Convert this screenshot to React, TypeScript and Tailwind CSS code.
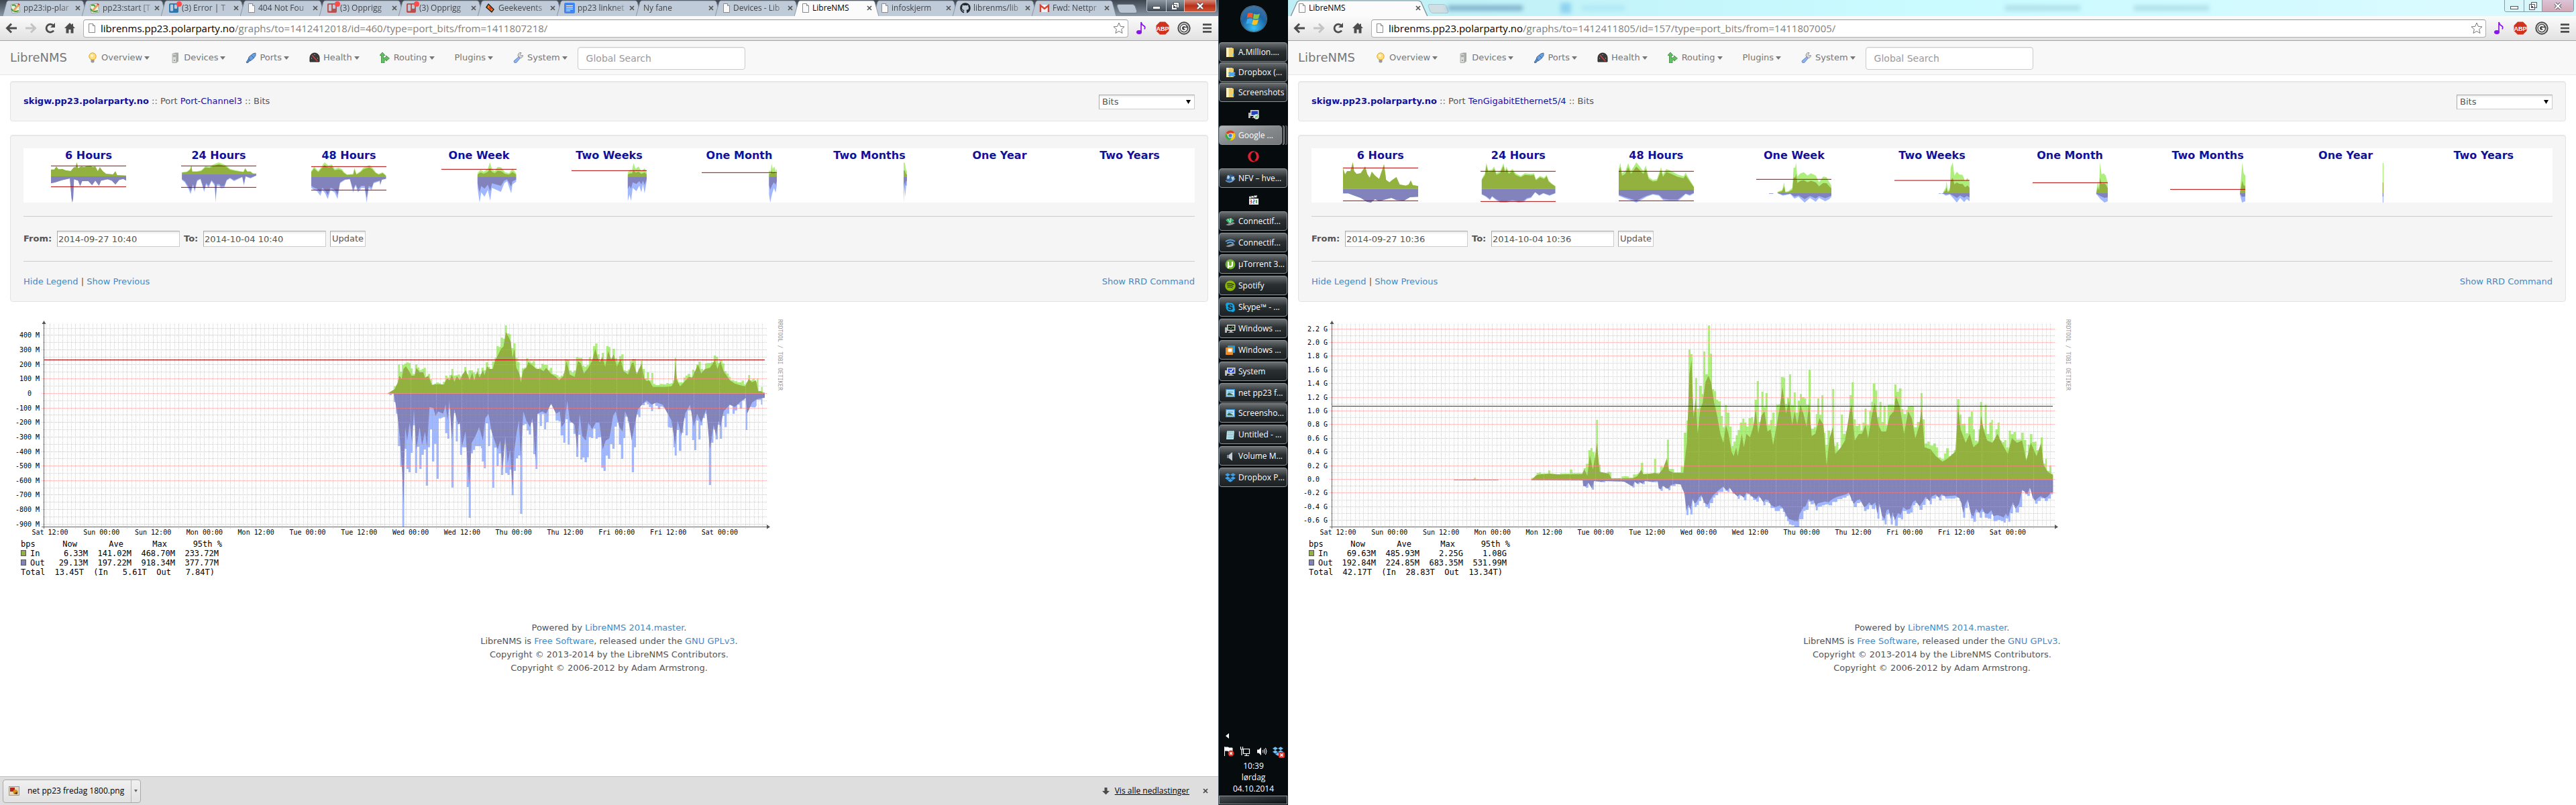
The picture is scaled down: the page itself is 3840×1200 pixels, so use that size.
import React from "react";
import { FaDropbox, FaGithub, FaOpera, FaSkype, FaSpotify, FaTrello } from "react-icons/fa";

const GREEN = "#92b13e";
const LIGHT_GREEN = "#aeee7d";
const VIOLET = "#8282bd";
const LIGHT_BLUE = "#a2b8fe";

/* ---------- chart helpers ---------- */

function pairs(s: string): number[][] {
  return s.trim().split(/\s+/).map((p) => p.split(",").map(Number));
}

function stepped(s: string, zero: number): string {
  const pts = pairs(s);
  let d = `M${pts[0][0]},${zero}`;
  pts.forEach(([x, y]) => {
    d += `H${x}V${y}`;
  });
  return d + `V${zero}Z`;
}

function filled(s: string, zero: number, factor = 1): string {
  const pts = pairs(s);
  const line = pts.map(([x, y]) => `L${x},${zero + (y - zero) * factor}`).join("");
  return `M${pts[0][0]},${zero}${line}L${pts[pts.length - 1][0]},${zero}Z`;
}

/* ---------- chart data ---------- */

type Traffic = {
  box: { x: number; y: number; w: number; h: number; view: string };
  zero: number;
  maxIn: string;
  avgIn: string;
  maxOut: string;
  avgOut?: string;
  axisZero: number;
  axisStep: number;
  labels: string[];
  first: number;
  limit: number;
};

const channelTraffic: Traffic = {
  box: { x: 570, y: 470, w: 580, h: 330, view: "0 0 1568 990" },
  zero: 350,
  maxIn:
    "20,347 46,318 55,313 63,220 71,252 79,222 88,217 97,211 106,214 114,237 122,262 132,220 141,233 149,245 158,240 167,235 175,275 184,262 192,285 200,310 209,305 218,300 227,304 235,309 244,297 253,270 262,278 270,267 278,240 286,270 295,268 304,265 313,272 321,262 330,231 338,265 347,246 356,246 365,255 373,262 382,237 390,262 399,235 408,246 417,210 426,230 434,242 443,207 452,190 460,138 469,142 477,100 486,105 494,45 502,81 511,85 518,147 528,125 537,190 545,210 553,275 562,237 571,233 580,192 588,205 597,212 606,205 614,233 623,239 632,235 641,217 650,222 659,222 667,245 675,235 684,262 693,263 701,268 710,275 719,270 727,260 736,196 745,200 753,247 762,255 771,247 780,187 789,190 797,190 806,225 814,230 823,223 832,187 840,197 849,138 858,126 867,175 875,205 884,168 893,200 902,138 911,142 919,190 928,150 937,192 946,205 954,182 963,175 972,245 980,250 989,242 998,205 1006,195 1015,195 1022,255 1032,240 1041,204 1049,240 1058,282 1066,255 1075,290 1084,258 1092,307 1100,312 1118,307 1130,308 1144,303 1153,306 1162,304 1170,290 1178,190 1184,285 1192,300 1204,300 1213,278 1222,270 1230,262 1240,275 1248,243 1257,250 1265,220 1274,207 1283,240 1292,245 1300,215 1310,213 1326,210 1335,180 1344,185 1353,213 1361,200 1370,215 1378,250 1387,260 1396,275 1404,290 1418,295 1430,300 1440,300 1448,292 1457,308 1466,300 1474,267 1482,290 1491,282 1500,297 1509,282 1515,338 1526,320 1532,345 1541,345",
  avgIn:
    "20,350 50,330 62,300 68,270 78,285 85,240 95,228 105,245 118,270 130,270 137,235 150,255 165,255 172,280 185,270 200,312 215,308 230,308 248,310 260,282 272,290 280,265 290,298 300,272 312,290 325,262 336,245 345,270 352,290 362,255 370,292 382,250 392,278 405,245 412,268 422,228 432,240 445,240 455,200 465,180 478,150 488,140 498,75 508,95 518,120 524,190 532,150 540,235 552,260 558,300 568,245 580,235 588,210 605,225 620,240 635,240 650,250 660,235 680,262 700,275 712,290 730,272 742,205 755,265 775,275 788,205 800,215 812,260 830,235 845,205 858,150 868,190 876,210 886,185 898,230 910,160 922,200 932,175 945,230 960,195 972,250 990,265 1005,215 1012,210 1025,265 1044,215 1055,280 1065,295 1075,290 1090,320 1110,320 1140,320 1165,318 1175,300 1181,205 1187,290 1200,318 1215,300 1235,275 1248,280 1260,250 1272,220 1285,260 1300,240 1320,235 1340,200 1350,240 1362,205 1375,250 1400,290 1420,305 1440,312 1462,318 1476,285 1490,300 1505,290 1515,340 1525,340 1541,348",
  maxOut:
    "20,352 28,357 38,352 46,388 55,440 63,585 72,678 81,945 88,597 97,687 105,702 114,615 122,492 132,705 140,588 149,687 158,624 167,600 175,762 184,590 192,510 200,654 209,575 218,731 227,461 238,458 244,455 253,527 262,552 270,418 278,770 287,438 296,564 304,485 313,624 321,590 330,590 340,768 348,906 356,617 365,602 373,585 390,585 397,595 401,654 409,684 417,483 426,585 434,510 443,771 451,592 460,675 469,618 478,714 487,575 495,705 504,714 513,690 521,805 529,696 538,640 547,627 555,888 564,492 573,487 582,515 590,533 599,480 608,621 617,687 625,442 634,495 643,442 652,510 660,478 670,402 680,397 690,410 698,470 710,475 718,537 729,570 738,465 747,578 755,480 770,530 781,633 790,535 798,645 806,636 815,657 824,635 832,545 841,549 850,507 859,552 868,545 882,682 891,696 900,628 909,642 918,576 927,597 936,498 945,480 953,578 962,642 971,549 979,454 988,475 997,470 1005,702 1014,590 1022,443 1032,455 1040,402 1050,402 1058,390 1066,398 1074,410 1083,428 1091,388 1100,405 1110,420 1120,408 1130,412 1140,422 1150,500 1158,503 1168,497 1173,590 1178,627 1186,513 1195,606 1205,525 1213,460 1222,537 1231,425 1240,425 1248,558 1257,603 1265,470 1274,555 1282,492 1290,460 1300,440 1308,440 1316,759 1325,570 1334,510 1343,555 1352,490 1360,552 1369,450 1379,500 1388,440 1398,400 1411,440 1420,425 1430,400 1440,418 1450,380 1460,370 1464,513 1471,410 1490,412 1505,405 1508,378 1520,378 1526,400 1531,370 1541,370",
  avgOut:
    "46,350 60,440 70,540 80,700 85,850 92,500 100,560 110,480 120,570 127,420 137,600 150,500 160,580 172,520 180,590 190,410 205,415 215,450 225,430 245,440 255,400 262,470 270,380 280,560 290,420 305,490 312,480 320,590 335,520 345,690 350,760 360,570 375,540 390,500 405,560 415,460 428,440 440,520 452,560 465,600 475,560 485,690 495,540 505,660 515,600 524,780 532,600 542,520 550,470 558,640 568,430 580,470 595,500 605,460 618,650 625,440 645,430 660,440 680,395 700,440 715,430 722,500 735,480 745,380 755,470 775,490 785,600 795,440 805,540 820,560 830,480 845,510 860,480 875,480 888,600 900,560 915,550 930,450 940,430 955,500 968,520 978,430 990,460 1005,560 1015,500 1030,420 1050,395 1065,380 1085,400 1105,390 1130,400 1150,440 1165,470 1180,580 1190,470 1205,540 1220,440 1240,400 1255,500 1268,440 1285,480 1305,420 1320,600 1335,490 1345,540 1355,470 1362,500 1375,430 1400,400 1420,410 1445,385 1465,370 1470,440 1490,390 1510,375 1541,368",
  axisZero: 587,
  axisStep: 21.63,
  labels: ["400 M", "300 M", "200 M", "100 M", "0  ", "-100 M", "-200 M", "-300 M", "-400 M", "-500 M", "-600 M", "-700 M", "-800 M", "-900 M"],
  first: 4,
  limit: 536.5,
};

const ethernetTraffic: Traffic = {
  box: { x: 0, y: 460, w: 1200, h: 420, view: "0 0 1568 1260" },
  zero: 766,
  maxIn:
    "323,765 362,757 366,765 409,766 474,757 484,735 489,733 493,738 507,724 511,740 516,742 530,737 549,720 554,736 573,738 576,714 580,694 585,633 589,624 593,642 597,695 600,498 604,698 609,738 622,730 627,733 630,758 650,750 664,757 672,742 680,738 687,690 692,738 713,672 717,735 725,706 730,712 738,586 742,717 752,732 765,706 771,555 776,500 780,183 784,204 788,460 793,310 797,448 801,345 806,382 809,192 813,293 818,75 822,202 826,361 830,370 834,407 838,415 843,480 847,530 851,432 855,465 860,528 864,615 868,595 872,567 876,543 880,510 885,492 889,510 893,528 897,490 902,485 906,515 909,408 913,324 917,507 922,372 926,440 930,378 934,520 939,498 943,465 948,525 951,430 956,428 960,306 965,308 968,426 972,400 976,294 980,432 985,375 989,465 993,412 997,382 1001,396 1006,402 1009,430 1014,273 1018,537 1024,530 1028,472 1031,402 1035,475 1039,388 1043,555 1047,610 1051,545 1056,610 1060,360 1064,615 1068,598 1072,636 1077,474 1081,560 1086,548 1090,543 1094,387 1098,330 1102,495 1106,525 1111,515 1115,545 1119,510 1123,447 1127,520 1132,458 1136,416 1139,336 1144,367 1148,485 1152,417 1156,507 1160,436 1164,520 1168,430 1180,432 1181,339 1185,372 1190,357 1195,450 1199,472 1204,452 1207,435 1215,437 1219,530 1225,507 1229,507 1232,378 1236,495 1240,603 1245,595 1250,613 1257,603 1262,620 1266,665 1272,673 1278,648 1282,625 1287,660 1292,650 1297,632 1303,405 1308,475 1312,515 1316,515 1320,558 1325,484 1330,460 1334,540 1338,590 1342,595 1345,540 1348,417 1352,540 1357,430 1361,560 1366,510 1370,497 1373,600 1378,540 1382,510 1386,590 1391,598 1395,588 1399,620 1404,546 1408,562 1413,552 1418,585 1428,555 1433,588 1438,672 1441,608 1445,561 1450,597 1454,595 1458,633 1462,660 1466,576 1470,693 1475,672 1478,725 1483,703 1487,738 1490,738",
  avgIn:
    "474,766 484,745 490,742 510,738 530,742 573,740 577,718 583,748 588,655 594,720 602,600 607,730 625,738 630,760 672,758 680,750 688,720 692,742 715,735 722,740 730,718 738,670 742,725 752,735 770,735 777,600 782,290 786,230 790,490 794,400 798,560 803,450 808,420 813,330 819,300 824,330 830,420 836,480 842,560 848,600 853,520 858,560 864,640 868,660 873,620 876,660 884,560 888,620 893,560 900,575 906,530 911,450 916,560 922,480 928,460 934,550 940,540 945,610 952,520 958,440 963,350 970,470 976,410 982,520 987,460 992,520 998,430 1004,470 1010,530 1015,420 1020,570 1027,560 1035,490 1043,520 1049,700 1055,580 1061,530 1066,650 1077,620 1085,590 1094,460 1098,430 1104,590 1112,560 1118,560 1125,520 1130,580 1137,480 1143,420 1150,520 1156,550 1165,550 1172,480 1180,460 1184,390 1192,440 1200,560 1208,460 1215,490 1222,580 1230,520 1234,440 1240,620 1252,630 1262,660 1275,685 1285,670 1300,640 1305,440 1310,540 1320,600 1328,560 1335,620 1345,600 1350,480 1356,550 1362,590 1372,600 1382,560 1390,600 1402,650 1410,580 1420,600 1430,590 1438,680 1447,600 1458,660 1467,600 1472,700 1480,730 1490,745",
  maxOut:
    "323,768 409,768 410,766 473,766 474,768 574,769 575,795 580,801 585,780 592,810 596,772 609,776 618,772 655,775 671,800 675,775 680,785 685,778 690,785 695,772 708,776 720,772 722,806 726,815 730,795 735,805 741,812 745,793 755,785 765,790 768,810 772,833 776,923 780,890 784,920 788,860 792,887 796,878 800,860 805,842 809,870 813,887 818,893 822,870 828,845 832,835 838,820 848,800 852,815 856,820 860,805 866,828 876,851 880,838 888,857 893,830 900,840 906,855 912,863 917,845 926,880 930,865 936,870 940,892 948,905 958,895 964,910 968,930 972,950 976,965 980,968 986,975 994,975 996,942 1004,905 1008,900 1014,863 1018,875 1024,870 1028,902 1032,885 1040,880 1046,876 1053,880 1060,865 1070,852 1080,845 1088,838 1092,830 1097,860 1102,888 1108,870 1114,865 1122,905 1127,898 1132,880 1137,896 1144,880 1148,939 1152,885 1157,948 1162,965 1166,920 1170,915 1174,965 1178,930 1182,972 1188,935 1194,943 1198,905 1205,918 1212,912 1217,880 1222,870 1230,900 1236,878 1242,852 1250,875 1254,850 1262,840 1268,858 1273,838 1280,850 1300,845 1308,860 1312,888 1315,935 1319,892 1324,865 1330,938 1335,953 1340,912 1347,935 1352,910 1357,935 1363,940 1370,920 1374,950 1382,945 1388,950 1394,957 1398,938 1403,953 1407,915 1412,880 1417,912 1424,888 1430,815 1436,830 1440,838 1445,805 1450,850 1455,872 1460,860 1466,848 1474,860 1480,850 1486,830 1490,830",
  axisZero: 715,
  axisStep: 20.4,
  labels: ["2.2 G", "2.0 G", "1.8 G", "1.6 G", "1.4 G", "1.2 G", "1.0 G", "0.8 G", "0.6 G", "0.4 G", "0.2 G", "0.0  ", "-0.2 G", "-0.4 G", "-0.6 G"],
  first: 11,
  limit: 605.5,
};

const timeLabels = ["Sat 12:00", "Sun 00:00", "Sun 12:00", "Mon 00:00", "Mon 12:00", "Tue 00:00", "Tue 12:00", "Wed 00:00", "Wed 12:00", "Thu 00:00", "Thu 12:00", "Fri 00:00", "Fri 12:00", "Sat 00:00"];

function TrafficChart({ t }: { t: Traffic }) {
  const hours: React.ReactNode[] = [];
  for (let i = -1; i < 167; i++) {
    const x = Math.round(74 + i * 6.4) + 0.5;
    if (x > 1142) break;
    const major = i % 6 === 0;
    hours.push(<path key={i} d={`M${x},483V${major ? 788 : 785}`} stroke={major ? "#f99" : "#999"} strokeOpacity={major ? 0.75 : 0.4} strokeDasharray="1 1" />);
  }
  const rows: React.ReactNode[] = [];
  for (let i = -30; i <= 30; i++) {
    const y = Math.round(t.axisZero + (i * t.axisStep) / 2) - 0.5;
    if (y < 484 || y > 784) continue;
    const major = i % 2 === 0;
    rows.push(<path key={i} d={`M${major ? 62 : 64},${y}H1144`} stroke={major ? "#f88" : "#999"} strokeOpacity={major ? 0.75 : 0.45} strokeDasharray="1 1" />);
  }
  return (
    <svg width="1170" height="334" viewBox="15 470 1170 334" className="block max-w-none shrink-0" role="img" aria-label="Port traffic">
      <svg x={t.box.x} y={t.box.y} width={t.box.w} height={t.box.h} viewBox={t.box.view} preserveAspectRatio="none">
        <path d={stepped(t.maxIn, t.zero)} fill={LIGHT_GREEN} />
        <path d={filled(t.avgIn, t.zero)} fill={GREEN} />
        <path d={stepped(t.maxOut, t.zero)} fill={LIGHT_BLUE} />
        <path d={t.avgOut ? filled(t.avgOut, t.zero) : filled(t.maxOut, t.zero, 0.88)} fill={VIOLET} />
      </svg>
      <g fill="none">{hours}{rows}</g>
      <path d={`M65,${t.limit}H1140`} stroke="#b00000" strokeWidth="1" />
      <path d="M65.5,788V481M62,785.5H1145" stroke="#666" />
      <path d="M62.5,483l3,-5l3,5zM1143,782l5,3.5l-5,3z" fill="#555" />
      <g fontFamily="'DejaVu Sans Mono', monospace" fontSize="10" fill="#000">
        {t.labels.map((l, i) => (
          <text key={l} x="59" y={Math.round(t.axisZero + (i - t.first) * t.axisStep + 3)} textAnchor="end" xmlSpace="preserve">{l}</text>
        ))}
        {timeLabels.map((l, i) => (
          <text key={l} x={74.5 + i * 76.8} y="797" textAnchor="middle">{l}</text>
        ))}
      </g>
      <text transform="translate(1160 476) rotate(90)" fontFamily="'DejaVu Sans Mono', monospace" fontSize="8" fill="#999">RRDTOOL / TOBI OETIKER</text>
    </svg>
  );
}

/* ---------- period thumbnails ---------- */

type Thumb = { title: string; x0: number; zero: number; lines: number[]; f: number; up: string; down: string };

const channelThumbs: Thumb[] = [
  { title: "6 Hours", x0: 124, zero: 249, lines: [202, 295], f: 1, up: "124,218 132,218 137,205 142,217 152,216 160,222 172,225 180,208 184,208 187,186 190,212 197,205 205,207 212,203 220,200 225,207 232,205 238,226 243,208 250,225 258,237 275,240 281,226 285,243 307,245", down: "124,280 135,275 150,266 170,258 174,345 176,366 178,345 180,262 190,268 195,292 200,270 215,270 224,288 232,268 241,290 246,268 262,262 272,268 281,285 290,265 300,260 307,268" },
  { title: "24 Hours", x0: 441, zero: 240, lines: [202, 298], f: 0.85, up: "443,230 455,228 463,215 466,195 468,226 480,226 490,222 500,203 510,206 520,195 533,186 545,195 552,202 560,215 575,222 593,228 597,210 602,226 610,226 616,236 624,236", down: "443,265 450,275 460,308 464,328 470,290 474,318 480,270 488,262 497,318 502,285 508,300 515,270 523,290 525,366 528,290 534,290 538,302 546,300 552,268 560,258 570,270 590,252 594,290 598,250 610,258 624,245" },
  { title: "48 Hours", x0: 758, zero: 252, lines: [205, 310], f: 0.82, up: "758,225 765,205 775,225 785,200 790,186 800,200 808,195 815,215 824,210 832,215 838,230 845,240 860,238 863,210 868,238 878,225 885,210 900,198 907,210 915,230 922,238 932,230 940,245", down: "758,300 765,310 772,315 780,335 785,310 792,325 798,350 805,310 815,320 822,350 828,280 840,265 852,262 860,320 866,290 872,320 880,300 888,300 893,366 898,300 905,310 910,280 925,270 926,290 930,265 940,260" },
  { title: "One Week", x0: 1075, zero: 250, lines: [217], f: 0.6, up: "1163,235 1170,218 1178,228 1188,215 1193,186 1198,215 1205,225 1212,206 1220,208 1230,230 1240,235 1248,214 1257,235", down: "1163,300 1168,366 1172,320 1180,340 1188,310 1194,358 1198,300 1210,310 1220,318 1228,280 1235,270 1245,325 1248,285 1257,272" },
  { title: "Two Weeks", x0: 0, zero: 250, lines: [223], f: 0.5, up: "137,230 143,220 147,222 151,190 156,215 163,205 170,225 178,212 183,230", down: "137,360 141,330 145,358 149,300 158,315 165,290 170,320 174,285 178,325 183,270" },
  { title: "One Month", x0: 0, zero: 250, lines: [232], f: 0.5, up: "164,222 168,225 170,192 173,215 177,205 180,225 183,215", down: "164,330 167,366 171,330 176,300 180,322 183,290" },
  { title: "Two Months", x0: 0, zero: 252, lines: [], f: 0.45, up: "175,186 178,190 180,215 183,228", down: "175,366 177,300 179,340 181,290 183,290" },
  { title: "One Year", x0: 0, zero: 252, lines: [], f: 1, up: "", down: "" },
  { title: "Two Years", x0: 0, zero: 252, lines: [], f: 1, up: "", down: "" },
];

const ethernetThumbs: Thumb[] = [
  { title: "6 Hours", x0: 132, zero: 305, lines: [211, 358], f: 1, up: "132,212 137,240 142,225 150,225 156,186 159,225 165,238 175,235 186,205 191,238 197,255 202,228 210,245 220,260 232,195 237,265 245,275 252,265 262,252 270,285 285,290 292,285 297,267 302,288 315,292", down: "132,325 145,325 160,335 175,345 190,362 200,366 210,350 220,360 235,352 250,345 262,355 280,358 295,342 315,340" },
  { title: "24 Hours", x0: 467, zero: 305, lines: [226, 361], f: 0.9, up: "470,260 478,235 481,188 486,222 495,218 500,205 506,235 515,225 523,190 527,225 530,205 536,230 545,215 552,235 565,247 575,235 590,238 597,235 602,262 612,247 622,255 628,242 633,268 640,280 649,292", down: "470,330 480,340 490,355 495,340 505,355 515,366 530,366 545,360 560,366 572,364 580,350 590,345 600,320 610,335 620,325 635,335 649,325" },
  { title: "48 Hours", x0: 802, zero: 309, lines: [226, 358], f: 0.85, up: "802,215 806,188 810,235 818,225 825,190 832,225 845,186 852,202 862,225 868,200 875,252 885,265 895,262 905,208 910,240 918,215 930,225 945,240 960,248 965,232 972,255 985,295", down: "802,335 815,345 830,355 845,366 860,350 870,340 885,330 900,335 910,355 925,360 945,360 955,345 965,328 975,335 985,325" },
  { title: "One Week", x0: 1137, zero: 324, lines: [262], f: 0.62, up: "1189,318 1200,310 1205,275 1208,318 1215,315 1225,300 1228,210 1232,210 1234,186 1237,250 1245,235 1253,230 1262,245 1270,235 1282,245 1290,275 1300,250 1308,252 1315,275 1320,290", down: "1168,326 1178,326 1179,324 1189,324 1202,335 1220,328 1230,348 1240,340 1255,366 1268,345 1282,362 1290,345 1305,360 1315,350 1320,340" },
  { title: "Two Weeks", x0: 0, zero: 324, lines: [267], f: 0.5, up: "119,318 125,300 127,270 130,315 135,300 137,210 142,186 146,245 152,228 158,240 166,242 172,270 178,255 183,275", down: "108,326 113,326 114,324 119,328 125,335 135,330 145,350 152,366 160,345 170,364 176,350 183,360" },
  { title: "One Month", x0: 0, zero: 324, lines: [277], f: 0.5, up: "155,318 159,270 162,300 164,186 168,240 173,235 178,245 183,280", down: "155,328 165,350 175,366 183,360" },
  { title: "Two Months", x0: 0, zero: 324, lines: [307], f: 0.4, up: "170,320 173,250 176,186 179,235 183,245", down: "170,330 175,366 183,360" },
  { title: "One Year", x0: 0, zero: 324, lines: [], f: 0.35, up: "181,188 183,188", down: "181,366 183,366" },
  { title: "Two Years", x0: 0, zero: 324, lines: [], f: 1, up: "", down: "" },
];

function ThumbChart({ t }: { t: Thumb }) {
  return (
    <svg width="112" height="60" viewBox={`${t.x0} 186 183 180`} preserveAspectRatio="none" className="mx-auto block" aria-hidden="true">
      {t.up && (
        <>
          <path d={filled(t.up, t.zero)} fill={LIGHT_GREEN} />
          <path d={filled(t.up, t.zero, t.f)} fill={GREEN} />
          <path d={filled(t.down, t.zero)} fill={LIGHT_BLUE} />
          <path d={filled(t.down, t.zero, t.f)} fill={VIOLET} />
        </>
      )}
      {t.lines.map((y) => (
        <rect key={y} x={t.x0} y={y - 1.5} width="183" height="3" fill="#b00000" />
      ))}
    </svg>
  );
}

/* ---------- small icons ---------- */

function PageIcon() {
  return (
    <svg width="12" height="14" viewBox="0 0 12 14" className="shrink-0">
      <path d="M1.5 .5h6l3 3v10h-9z" fill="#fafafa" stroke="#8a8a8a" />
      <path d="M7.5 .5v3h3" fill="#ddd" stroke="#8a8a8a" />
    </svg>
  );
}

function Favicon({ kind }: { kind: string }) {
  switch (kind) {
    case "wiki":
      return (
        <svg width="16" height="16" viewBox="0 0 16 16" className="shrink-0">
          <rect x="2" y="2" width="12" height="13" rx="1" fill="#e8f0e0" stroke="#8a9a80" strokeWidth=".8" transform="rotate(-8 8 8)" />
          <path d="M2 9q3 6 11 3M3 4q6-2 6 4" stroke="#3f9b3a" strokeWidth="2" fill="none" />
          <path d="M4 11L12 2l2 2-8 9z" fill="#e8a05a" />
          <path d="M11 2l2-1 2 2-1 1z" fill="#d2332b" />
        </svg>
      );
    case "trello":
      return <span className="relative shrink-0"><FaTrello size={16} color="#2c78ad" /><span className="absolute -right-1 -top-0.5 size-2 rounded-full bg-[#ff4a4a]" /></span>;
    case "trelloRed":
      return <span className="relative shrink-0"><FaTrello size={16} color="#b5524f" /><span className="absolute -right-1 -top-0.5 size-2 rounded-full bg-[#ff4a4a]" /></span>;
    case "geek":
      return (
        <svg width="16" height="16" viewBox="0 0 16 16" className="shrink-0">
          <path d="M5 1l9 9-4 5-9-8z" fill="#1b1b1b" />
          <path d="M5 3l7 7-2 3-7-6z" fill="#f0801e" />
          <path d="M7 5l3 4-1 2-3-3z" fill="#e02c1c" />
        </svg>
      );
    case "docs":
      return (
        <svg width="16" height="16" viewBox="0 0 16 16" className="shrink-0">
          <rect width="16" height="16" rx="2" fill="#4285f4" />
          <path d="M3 4.5h10M3 7h10M3 9.5h10M3 12h6" stroke="#fff" strokeWidth="1.2" />
        </svg>
      );
    case "github":
      return <FaGithub size={16} color="#24292e" className="shrink-0" />;
    case "mail":
      return (
        <svg width="16" height="16" viewBox="0 0 16 16" className="shrink-0">
          <rect x="1" y="3" width="14" height="11" fill="#f2f2f2" />
          <path d="M2 14V4l6 5 6-5v10" fill="none" stroke="#d8432f" strokeWidth="2.4" />
        </svg>
      );
    case "page":
      return <PageIcon />;
    default:
      return null;
  }
}

function NavIcon({ kind }: { kind: string }) {
  const art: Record<string, React.ReactNode> = {
    bulb: (
      <>
        <circle cx="8" cy="6" r="5.2" fill="#ffdf7a" stroke="#e3a52e" />
        <circle cx="7" cy="5" r="2" fill="#fff6cf" />
        <path d="M5.5 11h5v3.5l-1.5 1h-2l-1.5-1z" fill="#9a9a9a" />
      </>
    ),
    server: (
      <>
        <path d="M5 2l3-1.5h5v13L10 15.5H5z" fill="#a9a9a9" />
        <path d="M4 2h6v13.500H4z" fill="#dcdcdc" stroke="#999" strokeWidth=".7" />
        <path d="M5 4.5h4M5 6.500h4" stroke="#888" />
        <circle cx="7" cy="12" r="1" fill="#59b04b" />
      </>
    ),
    plug: (
      <>
        <path d="M15 1l-4 1-6 5-1 4 3 2 5-4 3-4z" fill="#6f9fd8" stroke="#3f6fae" />
        <path d="M5 9l-4 6 2 1 4-4zM8 4l5 5" fill="#5b8bc8" stroke="#3d68a4" />
      </>
    ),
    gauge: (
      <>
        <path d="M1 14V8a7 7 0 0 1 14 0v6z" fill="#3b3b3d" stroke="#222" />
        <path d="M4 4l8 9" stroke="#e0443a" strokeWidth="1.2" />
        <path d="M3 9h1M12 9h1M8 3v1" stroke="#ddd" />
      </>
    ),
    route: <path d="M4 0l4 4.500H5.500V9l4-2V5l5 4-5 4v-2.500L7 12v4H2.500V4.500H0z" fill="#63c05f" stroke="#35883a" strokeWidth=".8" />,
    wrench: (
      <>
        <path d="M14.5 4.5a4 4 0 0 1-5 4L8 7a4 4 0 0 1 4-6.500l-1.500 3 1.500 1.500z" fill="#d8d8d8" stroke="#8a8a8a" strokeWidth=".9" />
        <path d="M8.500 6.500l2 2-6 7q-2 1-3-.5t.5-3z" fill="#8fb4ee" stroke="#5579b8" strokeWidth=".9" />
      </>
    ),
  };
  return <svg width="16" height="16" viewBox="0 0 16 16" className="shrink-0" aria-hidden="true">{art[kind]}</svg>;
}

/* ---------- browser chrome ---------- */

type TabInfo = { title: string; icon: string; active?: boolean };

const leftTabs: TabInfo[] = [
  { title: "pp23:ip-plar", icon: "wiki" },
  { title: "pp23:start [T", icon: "wiki" },
  { title: "(3) Error | T", icon: "trello" },
  { title: "404 Not Fou", icon: "page" },
  { title: "(3) Opprigg", icon: "trelloRed" },
  { title: "(3) Opprigg", icon: "trelloRed" },
  { title: "Geekevents", icon: "geek" },
  { title: "pp23 linknet", icon: "docs" },
  { title: "Ny fane", icon: "" },
  { title: "Devices - Lib", icon: "page" },
  { title: "LibreNMS", icon: "page", active: true },
  { title: "infoskjerm", icon: "page" },
  { title: "librenms/lib", icon: "github" },
  { title: "Fwd: Nettpr", icon: "mail" },
];

function Tab({ tab, wide }: { tab: TabInfo; wide?: boolean }) {
  return (
    <div className={`relative h-6 shrink-0 ${wide ? "w-[196px]" : "w-[118px]"} ${tab.active ? "z-10" : ""}`}>
      <svg className="absolute left-0 top-0 h-6 w-[calc(100%+8px)]" viewBox="0 0 126 24" preserveAspectRatio="none" aria-hidden="true">
        <path d="M0 24.500L6 3q1-2 3-2H117q2 0 3 2L126 24.500z" fill={tab.active ? "#fbfbfb" : "#c0cbda"} stroke="#7d8792" strokeWidth=".8" />
      </svg>
      <div className="relative flex h-full items-center gap-1 pl-[11px]">
        <Favicon kind={tab.icon} />
        <button className={`flex-1 whitespace-nowrap text-left text-xs ${tab.active ? "text-black" : "text-[#444] [mask-image:linear-gradient(to_right,#000_75%,rgba(0,0,0,0.35))]"}`}>{tab.title}</button>
        <button aria-label={`Close ${tab.title}`} className="shrink-0 px-0.5">
          <svg width="8" height="8" viewBox="0 0 8 8"><path d="M1 1l6 6M7 1L1 7" stroke="#555" strokeWidth="1.700" /></svg>
        </button>
      </div>
    </div>
  );
}

function WindowButtons({ glass }: { glass?: boolean }) {
  const edge = glass ? "border-[#7f9fa8]" : "border-[#c3ccd4]";
  return (
    <div className={`mr-[3px] flex h-[18px] shrink-0 self-start overflow-hidden rounded-b border border-t-0 ${edge}`}>
      <button aria-label="Minimize" className={`grid w-7 place-items-center ${glass ? "bg-[#d9f6fb]" : "bg-linear-to-b from-[#8e98a2] to-[#3f4a55]"}`}>
        <svg width="12" height="12" viewBox="0 0 12 12"><rect x=".5" y="6.500" width="11" height="4" fill="#fff" stroke="#4d5562" /></svg>
      </button>
      <button aria-label="Restore" className={`grid w-7 place-items-center border-x ${edge} ${glass ? "bg-[#d9f6fb]" : "bg-linear-to-b from-[#8e98a2] to-[#3f4a55]"}`}>
        <svg width="14" height="12" viewBox="0 0 14 12"><path d="M4.500 .5h8v8h-8zM1.500 3.500h8v8h-8z" fill="#fff" stroke="#4d5562" /><path d="M4 6h3v3H4z" fill="#4d5562" /></svg>
      </button>
      <button aria-label="Close" className={`grid w-[46px] place-items-center ${glass ? "bg-linear-to-b from-[#dcc3d6] to-[#d3a9b6]" : "bg-linear-to-b from-[#d58a7a] via-[#b92f17] to-[#cf5434]"}`}>
        <svg width="14" height="12" viewBox="0 0 14 12"><path d="M3 2l8 8M11 2l-8 8" stroke="#4d4a5a" strokeWidth="4" /><path d="M3 2l8 8M11 2l-8 8" stroke="#fff" strokeWidth="2.400" /></svg>
      </button>
    </div>
  );
}

function Toolbar({ path }: { path: string }) {
  const host = "librenms.pp23.polarparty.no";
  return (
    <div className="flex h-[37px] items-center border-b border-[#a4a4a4] bg-linear-to-b from-[#fbfbfb] to-[#e2e2e2] pl-2 pr-[9px]">
      <button aria-label="Back" className="w-[29px]">
        <svg width="18" height="16" viewBox="0 0 18 16"><path d="M9 1.500L2.500 8 9 14.500M3 8h14" fill="none" stroke="#4c4c4c" strokeWidth="3" /></svg>
      </button>
      <button aria-label="Forward" className="w-[29px]">
        <svg width="18" height="16" viewBox="0 0 18 16"><path d="M9 1.500L15.500 8 9 14.500M15 8H1" fill="none" stroke="#c4c4c4" strokeWidth="3" /></svg>
      </button>
      <button aria-label="Reload" className="w-[29px]">
        <svg width="18" height="16" viewBox="0 0 18 16"><path d="M14 11.500A6 6 0 1 1 13 3.500" fill="none" stroke="#4c4c4c" strokeWidth="2.800" /><path d="M16 0v7H9z" fill="#4c4c4c" /></svg>
      </button>
      <button aria-label="Home" className="w-[29px]">
        <svg width="18" height="16" viewBox="0 0 18 16"><path d="M9 0L1 8h2.500v7.500H7.500V10h3v5.500h4V8H17l-3-3V1.500h-2V3z" fill="#4c4c4c" /></svg>
      </button>
      <div className="flex h-[27px] min-w-0 flex-1 items-center gap-[7px] rounded-sm border border-[#b0b0b0] border-t-[#989898] bg-white pl-[6px] pr-1">
        <PageIcon />
        <button aria-label="Address" className="min-w-0 flex-1 truncate text-left text-[15px] text-[#7f7f7f]"><span className="text-black">{host}</span>{path}</button>
        <svg width="18" height="18" viewBox="0 0 18 18" className="shrink-0" aria-hidden="true"><path d="M9 1l2.300 5.400 5.700.5-4.300 3.800 1.300 5.800L9 13.500 4 16.500l1.300-5.800L1 6.900l5.700-.5z" fill="#fff" stroke="#777" /></svg>
      </div>
      <svg width="16" height="20" viewBox="0 0 16 20" className="ml-[11px]" aria-hidden="true"><ellipse cx="5" cy="16" rx="4" ry="3" fill="#8a12ee" /><path d="M8 16V1q1 4 4 5.500t1 5" fill="none" stroke="#8a12ee" strokeWidth="1.700" /></svg>
      <svg width="20" height="20" viewBox="0 0 20 20" className="ml-[14px]" aria-hidden="true"><path d="M6 .5h8L19.500 6v8L14 19.500H6L.5 14V6z" fill="#d0321e" /><text x="10" y="13.500" textAnchor="middle" fontSize="9" fontWeight="bold" fill="#fff" fontFamily="Liberation Sans, sans-serif">ABP</text></svg>
      <svg width="20" height="20" viewBox="0 0 20 20" className="ml-3" aria-hidden="true"><circle cx="10" cy="10" r="8.700" fill="#eee" stroke="#4a4a4a" strokeWidth="2" /><circle cx="10" cy="10" r="6.500" fill="#4a4a4a" /><path d="M13 7.500a4 4 0 1 0 .5 4V10.200H10" fill="none" stroke="#fff" strokeWidth="2" /></svg>
      <button aria-label="Menu" className="ml-3 pl-1.5"><svg width="14" height="14" viewBox="0 0 14 14"><path d="M0 1.700h13M0 7h13M0 12.300h13" stroke="#4c4c4c" strokeWidth="2.700" /></svg></button>
    </div>
  );
}

/* ---------- LibreNMS page ---------- */

const navItems = [
  { label: "Overview", icon: "bulb" },
  { label: "Devices", icon: "server" },
  { label: "Ports", icon: "plug" },
  { label: "Health", icon: "gauge" },
  { label: "Routing", icon: "route" },
  { label: "Plugins", icon: "" },
  { label: "System", icon: "wrench" },
];

type PageData = {
  id: string;
  port: string;
  from: string;
  to: string;
  thumbs: Thumb[];
  traffic: Traffic;
  inRow: string[];
  outRow: string[];
  total: string;
};

const well = "rounded border border-[#e3e3e3] bg-[#f5f5f5] p-[19px] shadow-[inset_0_1px_1px_rgba(0,0,0,0.05)]";
const field = "border border-[#ccc] border-l-[#aaa] border-t-[#aaa] bg-white bg-linear-to-b from-[#e8e8e8] to-white to-20% text-[#555]";

function LibrePage({ d }: { d: PageData }) {
  return (
    <div className="flex-1 bg-white font-['DejaVu_Sans',sans-serif] text-[13px] leading-5 text-[#555]">
      <nav className="flex h-[51px] items-center border-b border-[#e7e7e7] bg-[#f8f8f8] pl-[15px] text-[#777]">
        <a href="#home" className="mr-[15px] text-lg">LibreNMS</a>
        {navItems.map((n) => (
          <a key={n.label} href={`#${n.label}`} className="flex items-center gap-[5px] px-[15px]">
            {n.icon && <NavIcon kind={n.icon} />}
            <span className="flex items-center gap-[3px]">
              {n.label}
              <svg width="8" height="5" viewBox="0 0 8 5" aria-hidden="true"><path d="M0 0h8L4 5z" fill="#777" /></svg>
            </span>
          </a>
        ))}
        <input aria-label="Global Search" placeholder="Global Search" className="mt-0.5 h-[34px] w-[250px] rounded border border-[#ccc] bg-white px-3 text-sm shadow-[inset_0_1px_1px_rgba(0,0,0,0.075)] placeholder:text-[#999]" />
      </nav>
      <main className="px-[15px] pt-[9px]">
        <section className={`${well} flex items-center justify-between`}>
          <div>
            <a href="#device" className="font-bold text-[#11119c]">skigw.pp23.polarparty.no</a> :: Port <a href="#port" className="text-[#11119c]">{d.port}</a> :: Bits
          </div>
          <div className="relative h-5">
            <select aria-label="Graph type" className={`${field} h-[22px] w-[143px] appearance-none pl-1`}>
              <option>Bits</option>
            </select>
            <svg width="7" height="6" viewBox="0 0 7 6" className="pointer-events-none absolute right-[6px] top-2" aria-hidden="true"><path d="M0 0h7L3.500 6z" fill="#000" /></svg>
          </div>
        </section>
        <section className={`${well} mt-5`}>
          <div className="grid grid-cols-9 bg-white">
            {d.thumbs.map((t) => (
              <a key={t.title} href={`#${t.title}`} className="block text-center text-base font-bold leading-[21px] text-[#11119c]">
                {t.title}
                <ThumbChart t={t} />
              </a>
            ))}
          </div>
          <hr className="my-5 border-[#ccc]" />
          <form className="flex h-[26px] items-center" onSubmit={(e) => e.preventDefault()}>
            <label htmlFor={`${d.id}-from`} className="w-[50px] font-bold">From:</label>
            <input id={`${d.id}-from`} defaultValue={d.from} className={`${field} h-6 w-[183px] px-px`} />
            <label htmlFor={`${d.id}-to`} className="ml-1.5 w-[29px] font-bold">To:</label>
            <input id={`${d.id}-to`} defaultValue={d.to} className={`${field} h-6 w-[183px] px-px`} />
            <button className={`${field} ml-1.5 h-6 px-0.5`}>Update</button>
          </form>
          <hr className="my-5 border-[#ccc]" />
          <div className="flex justify-between">
            <div>
              <a href="#legend" className="text-[#428bca]">Hide Legend</a> | <a href="#previous" className="text-[#428bca]">Show Previous</a>
            </div>
            <a href="#rrd" className="text-[#428bca]">Show RRD Command</a>
          </div>
        </section>
        <section className="mt-5">
          <TrafficChart t={d.traffic} />
          <table className="ml-4 w-[300px] table-fixed font-['DejaVu_Sans_Mono',monospace] text-xs leading-[14px] text-black">
            <thead>
              <tr className="text-right">
                <th className="w-[40px] text-left font-normal">bps</th>
                <th className="w-[60px] pr-4 font-normal">Now</th>
                <th className="w-[65px] pr-3 font-normal">Ave</th>
                <th className="w-[65px] pr-3 font-normal">Max</th>
                <th className="w-[70px] font-normal">95th %</th>
              </tr>
            </thead>
            <tbody>
              {[d.inRow, d.outRow].map((r, i) => (
                <tr key={r[0]} className="text-right">
                  <th className="whitespace-nowrap text-left font-normal">
                    <span className={`mr-1.5 inline-block h-[9px] w-2 border border-[#555] ${i ? "bg-[#8282bd]" : "bg-[#92b13e]"}`} />
                    {r[0]}
                  </th>
                  <td>{r[1]}</td>
                  <td>{r[2]}</td>
                  <td>{r[3]}</td>
                  <td className="pr-[5px]">{r[4]}</td>
                </tr>
              ))}
              <tr>
                <td colSpan={5} className="whitespace-pre">{d.total}</td>
              </tr>
            </tbody>
          </table>
        </section>
        <footer className="pt-[66px] text-center">
          <p>Powered by <a href="#version" className="text-[#428bca]">LibreNMS 2014.master</a>.</p>
          <p>LibreNMS is <a href="#free" className="text-[#428bca]">Free Software</a>, released under the <a href="#gpl" className="text-[#428bca]">GNU GPLv3</a>.</p>
          <p>Copyright © 2013-2014 by the LibreNMS Contributors.</p>
          <p>Copyright © 2006-2012 by Adam Armstrong.</p>
        </footer>
      </main>
    </div>
  );
}

/* ---------- taskbar ---------- */

function TaskIcon({ kind }: { kind: string }) {
  const brand: Record<string, React.ReactNode> = {
    spotify: <FaSpotify size={16} color="#8db800" />,
    skype: <FaSkype size={16} color="#12a5e8" />,
    dropbox: <FaDropbox size={16} color="#3aa0ec" />,
    opera: <FaOpera size={17} color="#e0202c" />,
  };
  if (brand[kind]) return <span className="shrink-0">{brand[kind]}</span>;
  const folder = (
    <>
      <path d="M2 1h9v14H2z" fill="#f5e39a" />
      <path d="M6 1l7 1v13H6z" fill="#ecd070" />
      <path d="M2 1h3v14H2z" fill="#fdf3c4" />
      <path d="M12 10h1.500v4H12z" fill="#58a9dc" />
    </>
  );
  const photo = (
    <>
      <rect x="1" y="2" width="14" height="12" fill="#3a94d8" />
      <rect x="2.500" y="3.500" width="11" height="9" fill="#fff" />
      <path d="M3.500 4.500h9v4h-9z" fill="#7cc4ee" />
      <path d="M3.500 11.500V9l3-1.500 6 3v1z" fill="#2f6a4a" />
    </>
  );
  const screen = (accent: string) => (
    <>
      <rect x="0" y="6" width="3" height="8" fill="#bbb" />
      <rect x="3" y="2" width="12.500" height="9" fill="#d9d9d9" />
      <rect x="4.500" y="3.500" width="9.500" height="6" fill={accent} />
      <path d="M7 11h4v2h2v1H5v-1h2z" fill="#aaa" />
    </>
  );
  const art: Record<string, React.ReactNode> = {
    folder,
    folderBox: (
      <>
        {folder}
        <path d="M7 7l3 1.500L13 7l3 2-2.500 1.500L16 12l-3 2.500-3-1.500-3 1.500L4.500 12 7 10.500 4.500 9z" fill="#4aa8ef" />
      </>
    ),
    rdp: <>{screen("#2344b8")}<circle cx="12" cy="12" r="3.700" fill="#e9f3e4" /><path d="M10 11l2 1.500-2 1.500M14 10l-2 1.500 2 1.500" stroke="#2f8f2d" fill="none" /></>,
    chrome: (
      <>
        <circle cx="8" cy="8" r="7.500" fill="#f6c915" />
        <path d="M8 8L1.500 4.200A7.500 7.500 0 0 1 14.600 4.500H8z" fill="#dc3b2c" />
        <path d="M8 8L4.800 9.800 1.500 4.200A7.500 7.500 0 0 0 7.500 15.500L11 9.800z" fill="#3aa757" />
        <circle cx="8" cy="8" r="3.600" fill="#fff" />
        <circle cx="8" cy="8" r="2.800" fill="#3f7fe0" />
      </>
    ),
    globe: <><circle cx="8" cy="8" r="6" fill="#2c5f95" /><path d="M4 3q4 1 3 4t-4 1zM9 6l5-1q0 5-3 6z" fill="#b8cfe2" /><path d="M1 11q7 6 14-3" stroke="#7ea6cc" fill="none" strokeWidth="1.500" /></>,
    clap: <><path d="M1 3l12-2v3L1 5.500z" fill="#eee" /><path d="M3 2.500l2 2M7 2l2 2M11 1.300l2 2" stroke="#222" /><rect x="1" y="6" width="14" height="9" fill="#f4f4f4" /><path d="M2.500 8h2v5h-2M2.500 10.500h2" stroke="#d33" fill="none" /><path d="M7 8h2v2.500H7V13h2" stroke="#26a" fill="none" /><path d="M12 8v5" stroke="#2a8a2a" strokeWidth="1.500" /></>,
    fanGreen: <><path d="M1 6q7-6 13 1l-8 4z" fill="#35b96c" /><path d="M1 13q6 3 14-2l-3-2-6 2z" fill="#8d9396" /><path d="M4 4l4 6M9 3l-1 7" stroke="#d6f3e2" /></>,
    fanBlue: <><path d="M1 6q7-5 14 0M3 9q5-4 10 0" stroke="#5fa3da" strokeWidth="1.800" fill="none" /><path d="M1 13q6 3 14-2l-3-2-6 2z" fill="#8d9396" /></>,
    torrent: <><circle cx="8" cy="8" r="7.500" fill="#6fb52c" /><path d="M5 4v4.500q0 3 3 3t3-3V4M5 8v6" stroke="#fff" strokeWidth="2.200" fill="none" /></>,
    monitor: <>{screen("#111")}<path d="M5 7l2-1 2 2 2-3 3 2" stroke="#4fd65a" fill="none" /></>,
    vm: <><rect x="4" y="1" width="11" height="11" rx="1" fill="#2d93c9" /><rect x="1" y="4" width="11" height="11" rx="1" fill="#ef8b1f" /><rect x="4.500" y="5.500" width="6" height="5" fill="#fff" /></>,
    system: <>{screen("#2344d8")}<path d="M7 6l2 2 3.500-4" stroke="#fff" fill="none" strokeWidth="1.300" /></>,
    photo,
    note: <><path d="M3 2h11l-1 13H2z" fill="#bfe3ea" /><path d="M4 5h9M4 7.500h8.500M4 10h8.500M4 12.500h8" stroke="#78aebb" strokeWidth=".8" /><path d="M3 2h11" stroke="#555" strokeDasharray="1 1" strokeWidth="2" /></>,
    volume: <><path d="M3 6h3v5H3z" fill="#7b8791" /><path d="M6 6l5-4v13l-5-4z" fill="#c5ced6" /></>,
  };
  return <svg width="16" height="16" viewBox="0 0 16 16" className="shrink-0" aria-hidden="true">{art[kind]}</svg>;
}

type Task = { icon: string; label?: string; hot?: boolean; joined?: boolean };

const tasks: Task[] = [
  { icon: "folder", label: "A.Million...." },
  { icon: "folderBox", label: "Dropbox (...", joined: true },
  { icon: "folder", label: "Screenshots", joined: true },
  { icon: "rdp" },
  { icon: "chrome", label: "Google ...", hot: true },
  { icon: "opera" },
  { icon: "globe", label: "NFV – hve..." },
  { icon: "clap" },
  { icon: "fanGreen", label: "Connectif..." },
  { icon: "fanBlue", label: "Connectif..." },
  { icon: "torrent", label: "µTorrent 3..." },
  { icon: "spotify", label: "Spotify" },
  { icon: "skype", label: "Skype™ - ..." },
  { icon: "monitor", label: "Windows ..." },
  { icon: "vm", label: "Windows ..." },
  { icon: "system", label: "System" },
  { icon: "photo", label: "net pp23 f..." },
  { icon: "photo", label: "Screensho...", joined: true },
  { icon: "note", label: "Untitled - ..." },
  { icon: "volume", label: "Volume M..." },
  { icon: "dropbox", label: "Dropbox P..." },
];

function Taskbar() {
  return (
    <aside className="flex w-[104px] shrink-0 flex-col border-l border-[#44525e] bg-[#060b0e] text-xs text-white">
      <button aria-label="Start" className="mx-auto mb-[13px] mt-[9px] grid size-[38px] place-items-center rounded-full bg-[radial-gradient(circle_at_50%_85%,#35c2f5,#1d64a4_50%,#4f7ba3)] ring-1 ring-[#5c7890]">
        <svg width="24" height="24" viewBox="0 0 24 24" aria-hidden="true">
          <path d="M3 4q4-2 8 0l-1.500 7q-4-2-8 0z" fill="#f0592a" />
          <path d="M12 4.500q4 2 9 0l-2 7q-4 2-8 0z" fill="#8cc63e" />
          <path d="M2.200 12.500q4-2 8 0L8.500 20q-4-2-8 0z" fill="#3ea8e8" />
          <path d="M11 13q4 2 8 0l-2 7q-4 2-8 0z" fill="#fcc21f" />
        </svg>
      </button>
      {tasks.map((t, i) =>
        t.label ? (
          <div key={i} className={`flex h-[29px] pr-px ${t.joined ? "mt-px" : "mt-[3px]"}`}>
            <button
              className={`flex min-w-0 flex-1 items-center gap-1 whitespace-nowrap rounded-sm border border-[#8f9498] pl-2 ${
                t.hot ? "bg-linear-to-br from-[#b5b8ba] via-[#85898c] to-[#74787a]" : "bg-linear-to-b from-[#6c7072] via-[#2a2f32] via-45% to-[#1c2124]"
              }`}
            >
              <TaskIcon kind={t.icon} />
              {t.label}
            </button>
            {t.hot && <span className="ml-px w-[3px] rounded-r border border-l-0 border-[#8f9498] bg-[#555]" />}
            {t.hot && <span className="ml-px w-[3px] rounded-r border border-l-0 border-[#5f6468] bg-[#333]" />}
          </div>
        ) : (
          <button key={i} aria-label={t.icon} className="mt-[3px] grid h-[29px] place-items-center"><TaskIcon kind={t.icon} /></button>
        ),
      )}
      <div className="mt-auto">
        <button aria-label="Show hidden icons" className="ml-[10px] block h-4"><svg width="5" height="8" viewBox="0 0 5 8"><path d="M5 0v8L0 4z" fill="#fff" /></svg></button>
        <div className="mt-[7px] flex justify-between px-[7px]">
          <svg width="16" height="16" viewBox="0 0 16 16"><path d="M1.500 1v14M2 2h5l1 1h5v5H7L6 7H2z" fill="#fff" stroke="#fff" /><circle cx="11" cy="11" r="4.500" fill="#dd2f26" /><path d="M9.300 9.300l3.400 3.400M12.700 9.300l-3.400 3.400" stroke="#fff" strokeWidth="1.500" /></svg>
          <svg width="16" height="16" viewBox="0 0 16 16"><path d="M5.500 4.500h9v7h-9zM10 12v3M7 14.500h7M1.500 1v4h3V1M3 5v9" fill="none" stroke="#fff" strokeWidth="1.200" /></svg>
          <svg width="16" height="16" viewBox="0 0 16 16"><path d="M1 5.500h2.500L7 2v12l-3.500-3.500H1z" fill="#fff" /><path d="M9.500 6q1 2 0 4M11.500 4.500q2 3.500 0 7M13.500 3q3 5 0 10" fill="none" stroke="#fff" /></svg>
          <span className="relative"><FaDropbox size={16} color="#6fc0f7" /><svg width="9" height="9" viewBox="0 0 9 9" className="absolute -bottom-0.5 -right-0.5"><rect width="9" height="9" rx="2" fill="#dd2f26" /><path d="M2.500 2.500l4 4M6.500 2.500l-4 4" stroke="#fff" strokeWidth="1.500" /></svg></span>
        </div>
        <div className="mt-[5px] text-center leading-[17px]">
          <p>10:39</p>
          <p>lørdag</p>
          <p>04.10.2014</p>
        </div>
        <button aria-label="Show desktop" className="mb-px mt-0.5 block h-[13px] w-[102px] border border-[#8f9498] bg-linear-to-br from-[#4a4f52] to-[#0d1214]" />
      </div>
    </aside>
  );
}

function DownloadBar() {
  return (
    <div className="flex h-[43px] items-center border-t border-[#c4c4c4] bg-[#dedede] px-1 text-xs">
      <div className="flex h-[35px] rounded-sm border border-[#a9a9a9] bg-linear-to-b from-[#f0f0f0] to-[#e2e2e2]">
        <button className="flex items-center gap-3 pl-2 pr-2.5">
          <svg width="16" height="14" viewBox="0 0 16 14" aria-hidden="true"><rect x=".5" y=".5" width="15" height="13" fill="#e9d9b8" stroke="#999" /><path d="M2 2h7v6H2z" fill="#b8221c" /><circle cx="10" cy="8.500" r="3.500" fill="#d98f17" /><path d="M8 11l5 1V8z" fill="#5a3a12" /></svg>
          <span>net pp23 fredag 1800.png</span>
        </button>
        <button aria-label="Download options" className="border-l border-[#b5b5b5] px-1"><svg width="5" height="4" viewBox="0 0 5 4"><path d="M0 0h5L2.500 4z" fill="#666" /></svg></button>
      </div>
      <a href="#downloads" className="ml-auto flex items-center gap-2 text-black">
        <svg width="11" height="11" viewBox="0 0 11 11" aria-hidden="true"><path d="M3.500 0h4v5H11l-5.500 5.500L0 5h3.500z" fill="#4c4c4c" /></svg>
        <span className="underline">Vis alle nedlastinger</span>
      </a>
      <button aria-label="Close downloads" className="ml-5 mr-[11px]"><svg width="8" height="8" viewBox="0 0 8 8"><path d="M1 1l6 6M7 1L1 7" stroke="#444" strokeWidth="1.700" /></svg></button>
    </div>
  );
}

/* ---------- desktop ---------- */

const channelPage: PageData = {
  id: "channel",
  port: "Port-Channel3",
  from: "2014-09-27 10:40",
  to: "2014-10-04 10:40",
  thumbs: channelThumbs,
  traffic: channelTraffic,
  inRow: ["In", "6.33M", "141.02M", "468.70M", "233.72M"],
  outRow: ["Out", "29.13M", "197.22M", "918.34M", "377.77M"],
  total: "Total  13.45T  (In   5.61T  Out   7.84T)",
};

const ethernetPage: PageData = {
  id: "ethernet",
  port: "TenGigabitEthernet5/4",
  from: "2014-09-27 10:36",
  to: "2014-10-04 10:36",
  thumbs: ethernetThumbs,
  traffic: ethernetTraffic,
  inRow: ["In", "69.63M", "485.93M", "2.25G", "1.08G"],
  outRow: ["Out", "192.84M", "224.85M", "683.35M", "531.99M"],
  total: "Total  42.17T  (In  28.83T  Out  13.34T)",
};

export default function App() {
  return (
    <div className="flex min-h-screen font-['Open_Sans','Noto_Sans',sans-serif]">
      <div className="flex w-1/2 min-w-0">
        <div className="flex min-w-0 flex-1 flex-col">
          <header className="flex h-6 bg-linear-to-b from-[#3d4650] to-[#8b98a6] pl-1">
            {leftTabs.map((t, i) => <Tab key={i} tab={t} />)}
            <button aria-label="New tab" className="ml-2.5 mt-1.5 h-[14px] w-7 shrink-0 skew-x-[20deg] rounded-sm border border-[#707a84] bg-[#b9c5d2]" />
            <div className="flex-1" />
            <WindowButtons />
          </header>
          <Toolbar path="/graphs/to=1412412018/id=460/type=port_bits/from=1411807218/" />
          <LibrePage d={channelPage} />
          <DownloadBar />
        </div>
        <Taskbar />
      </div>
      <div className="flex w-1/2 min-w-0 flex-col">
        <header className="flex h-6 bg-linear-to-r from-[#bfeef5] via-[#c9fbff] to-[#dcfaff] pl-1">
          <Tab tab={{ title: "LibreNMS", icon: "page", active: true }} wide />
          <button aria-label="New tab" className="ml-2.5 mt-1.5 h-[14px] w-7 shrink-0 skew-x-[20deg] rounded-sm border border-[#a8c4cc] bg-[#cfdfe4]" />
          <div className="flex flex-1 items-center blur-[3px]" aria-hidden="true">
            <div className="h-2 w-28 bg-[#7fb2cc]" />
            <div className="ml-14 h-4 w-4 bg-[#8fd3ee]" />
            <div className="ml-4 h-2 w-16 bg-[#b0e8f4]" />
            <div className="ml-[36%] h-2 w-28 bg-[#b0e0ea]" />
            <div className="ml-20 h-2 w-28 bg-[#b0e0ea]" />
          </div>
          <WindowButtons glass />
        </header>
        <Toolbar path="/graphs/to=1412411805/id=157/type=port_bits/from=1411807005/" />
        <LibrePage d={ethernetPage} />
      </div>
    </div>
  );
}
